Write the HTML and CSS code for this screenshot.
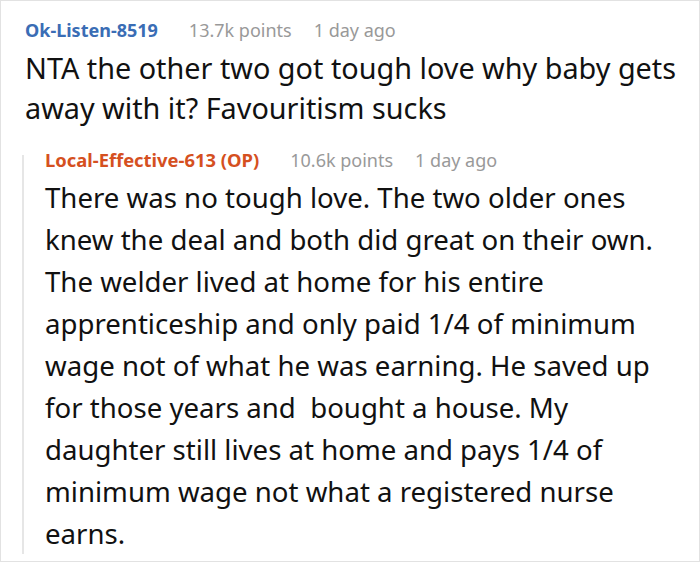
FILE: index.html
```html
<!DOCTYPE html>
<html>
<head>
<meta charset="utf-8">
<link rel="stylesheet" href="styles.css">
</head>
<body>
<div class="frame">
  <div class="comment">
    <div class="meta">
      <span class="user user-blue">Ok-Listen-8519</span>
      <span class="info">13.7k points</span>
      <span class="info">1 day ago</span>
    </div>
    <p class="body body-top">NTA the other two got tough love why baby gets away with it? Favouritism sucks</p>
    <div class="reply">
      <div class="meta meta-reply">
        <span class="user user-op">Local-Effective-613 (OP)</span>
        <span class="info">10.6k points</span>
        <span class="info">1 day ago</span>
      </div>
      <p class="body body-reply">There was no tough love. The two older ones knew the deal and both did great on their own. The welder lived at home for his entire apprenticeship and only paid 1/4 of minimum wage not of what he was earning. He saved up for those years and&nbsp; bought a house. My daughter still lives at home and pays 1/4 of minimum wage not what a registered nurse earns.</p>
    </div>
  </div>
</div>
</body>
</html>
```

FILE: styles.css
```css
html, body {
  margin: 0;
  padding: 0;
  background: #ffffff;
}
.frame {
  width: 700px;
  height: 562px;
  box-sizing: border-box;
  border: 1px solid #e2e2e2;
  background: #fff;
  overflow: hidden;
  font-family: "Noto Sans", "Open Sans", sans-serif;
  color: #111;
}
.comment {
  padding: 17px 8px 0 24px;
}
.meta {
  display: flex;
  gap: 22px;
  align-items: baseline;
  font-size: 18px;
  line-height: 24px;
}
.user {
  font-weight: 700;
  margin-right: 9px;
}
.user-blue {
  color: #3a6db5;
  font-size: 18px;
}
.user-op {
  color: #d5501f;
  font-size: 18.4px;
}
.info { color: #999999; }
.body {
  margin: 0;
}
.body-top {
  font-size: 28.8px;
  line-height: 40px;
  margin-top: 6px;
}
.reply {
  margin-top: 27px;
  margin-left: -3px;
  border-left: 2px solid #e6e6e6;
  padding-left: 21px;
}
.meta-reply {
  line-height: 10px;
}
.body-reply {
  font-size: 27.6px;
  line-height: 42px;
  margin-top: 11px;
  margin-bottom: -14px;
}
```
